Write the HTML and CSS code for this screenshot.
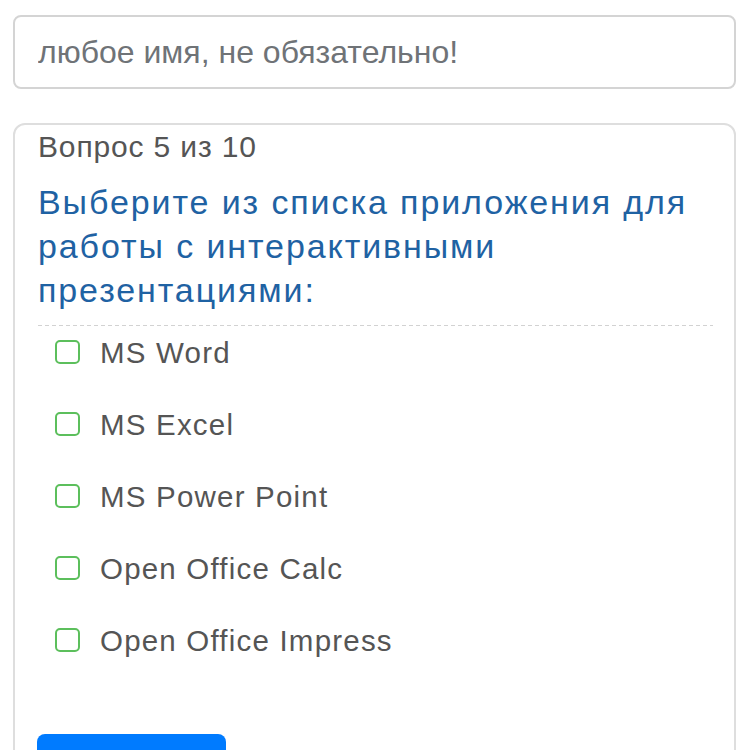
FILE: index.html
```html
<!DOCTYPE html>
<html lang="ru">
<head>
<meta charset="utf-8">
<title>Тест</title>
<link rel="stylesheet" href="styles.css">
</head>
<body>
<div class="page">
  <input class="name-input" type="text" placeholder="любое имя, не обязательно!">
  <div class="card">
    <div class="counter">Вопрос 5 из 10</div>
    <div class="question">Выберите из списка приложения для работы с интерактивными презентациями:</div>
    <div class="options">
      <label class="option"><span class="box"></span><span class="label">MS Word</span></label>
      <label class="option"><span class="box"></span><span class="label">MS Excel</span></label>
      <label class="option"><span class="box"></span><span class="label">MS Power Point</span></label>
      <label class="option"><span class="box"></span><span class="label">Open Office Calc</span></label>
      <label class="option"><span class="box"></span><span class="label">Open Office Impress</span></label>
    </div>
    <button class="submit" type="button" aria-label="Ответить"></button>
  </div>
</div>
</body>
</html>
```
FILE: styles.css
```css
* { box-sizing: border-box; }
html, body { margin: 0; background: #fff; }
body {
  font-family: "Liberation Sans", Arial, sans-serif;
  color: #555;
}
.page {
  padding: 15px 14px 0 13px;
  display: flex;
  flex-direction: column;
  gap: 34px;
}
.name-input {
  display: block;
  width: 100%;
  height: 74px;
  border: 2px solid #d4d4d4;
  border-radius: 8px;
  padding: 0 23px;
  font-family: inherit;
  font-size: 32px;
  color: #555;
  background: #fff;
  outline: none;
}
.name-input::placeholder { color: #6f7377; opacity: 1; }
.card {
  border: 2px solid #dedede;
  border-radius: 12px;
  padding: 6px 23px 40px 23px;
}
.counter {
  font-size: 30px;
  letter-spacing: 0.85px;
  line-height: 32px;
  color: #555;
}
.question {
  margin-top: 17px;
  margin-right: -2px;
  font-size: 34px;
  letter-spacing: 1.9px;
  line-height: 44px;
  color: #1f62a3;
  padding-bottom: 14px;
  background-image: linear-gradient(to right, #d2d2d2 4px, transparent 4px);
  background-size: 7px 1.5px;
  background-repeat: repeat-x;
  background-position: left bottom;
}
.options {
  display: flex;
  flex-direction: column;
  gap: 22px;
  padding-top: 2px;
}
.option {
  display: flex;
  align-items: center;
  height: 50px;
  gap: 20px;
  padding-left: 17px;
}
.box {
  width: 25px;
  height: 24px;
  border: 2px solid #5cbf5c;
  border-radius: 5px;
  flex: none;
  margin-top: -2px;
}
.label {
  font-size: 29.5px;
  letter-spacing: 1.2px;
  color: #555;
}
.submit {
  display: block;
  margin-top: 68px;
  margin-left: -1px;
  width: 189px;
  height: 60px;
  border: none;
  border-radius: 8px;
  background: #007bff;
}
```
